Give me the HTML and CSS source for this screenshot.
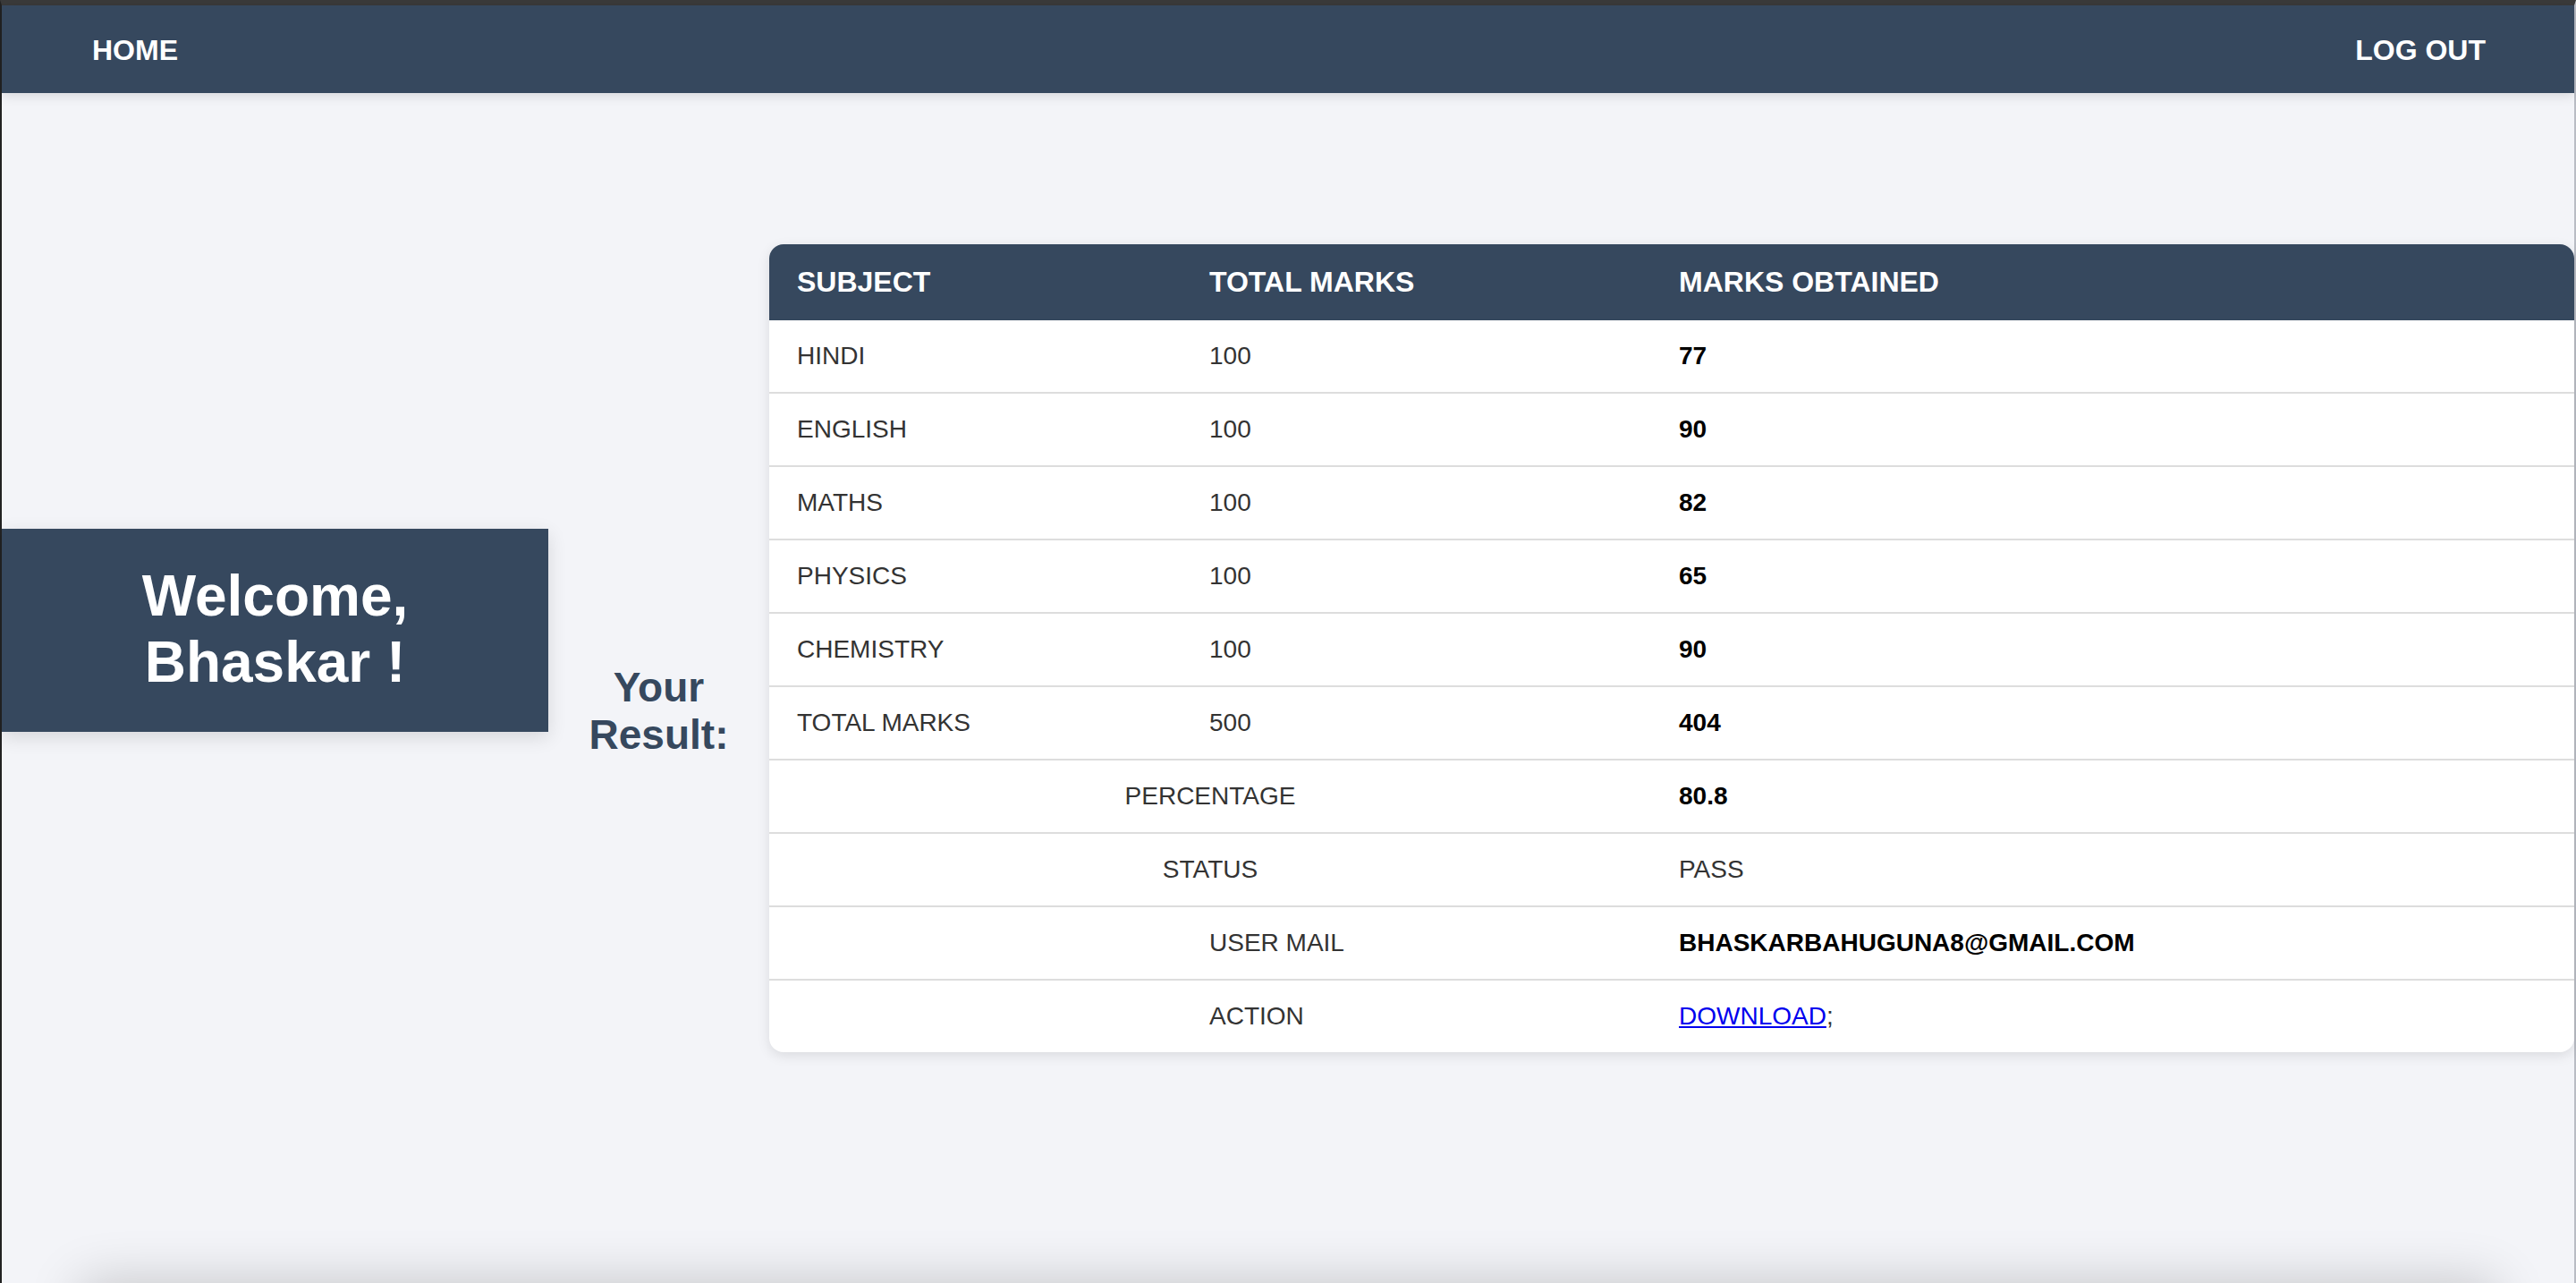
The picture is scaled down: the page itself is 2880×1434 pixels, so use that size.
FILE: index.html
```html
<!DOCTYPE html>
<html lang="en">
<head>
<meta charset="utf-8">
<title>Result</title>
<link rel="stylesheet" href="styles.css">
</head>
<body>
<div class="frame">
  <nav class="nav">
    <a class="nav-link" href="#">HOME</a>
    <a class="nav-link" href="#">LOG OUT</a>
  </nav>
  <main class="main">
    <div class="welcome">
      <h1 class="welcome-text">Welcome,<br>Bhaskar !</h1>
    </div>
    <h2 class="your-result">Your<br>Result:</h2>
    <div class="card">
      <table class="result">
        <colgroup>
          <col class="c1">
          <col class="c2">
          <col class="c3">
        </colgroup>
        <thead>
          <tr><th>SUBJECT</th><th>TOTAL MARKS</th><th>MARKS OBTAINED</th></tr>
        </thead>
        <tbody>
          <tr><td>HINDI</td><td>100</td><td class="strong">77</td></tr>
          <tr><td>ENGLISH</td><td>100</td><td class="strong">90</td></tr>
          <tr><td>MATHS</td><td>100</td><td class="strong">82</td></tr>
          <tr><td>PHYSICS</td><td>100</td><td class="strong">65</td></tr>
          <tr><td>CHEMISTRY</td><td>100</td><td class="strong">90</td></tr>
          <tr><td>TOTAL MARKS</td><td>500</td><td class="strong">404</td></tr>
          <tr><td colspan="2" class="center">PERCENTAGE</td><td class="strong">80.8</td></tr>
          <tr><td colspan="2" class="center">STATUS</td><td>PASS</td></tr>
          <tr><td></td><td>USER MAIL</td><td class="strong">BHASKARBAHUGUNA8@GMAIL.COM</td></tr>
          <tr><td></td><td>ACTION</td><td><a class="dl" href="#">DOWNLOAD</a>;</td></tr>
        </tbody>
      </table>
    </div>
  </main>
</div>
<footer class="footer"></footer>
</body>
</html>
```

FILE: styles.css
```css
* { box-sizing: border-box; }

html, body {
  margin: 0;
  padding: 0;
  overflow: hidden;
}

body {
  background: #f3f4f8;
  font-family: "Liberation Sans", Arial, Helvetica, sans-serif;
  color: #333;
}

.frame {
  height: 100vh;
  display: flex;
  flex-direction: column;
  border-top: 6px solid #3a3a3a;
  border-left: 2px solid #222;
  border-right: 2px solid #b9bcc4;
}

.nav {
  flex-shrink: 0;
  height: 98px;
  background: #36485e;
  display: flex;
  justify-content: space-between;
  align-items: center;
  padding: 3px 99px 0 101px;
  box-shadow: 0 3px 12px rgba(0, 0, 0, 0.12);
  position: relative;
  z-index: 2;
}

.nav-link {
  color: #fff;
  text-decoration: none;
  font-weight: bold;
  font-size: 32px;
  line-height: 37px;
}

.main {
  flex: 1;
  display: flex;
  align-items: flex-start;
  padding-top: 169px;
}

.welcome {
  flex-shrink: 0;
  width: 611px;
  height: 227px;
  margin-top: 318px;
  padding: 38px 0 41px;
  background: #36485e;
  box-shadow: 0 6px 20px rgba(0, 0, 0, 0.12);
}

.welcome-text {
  margin: 0;
  color: #fff;
  font-size: 64px;
  line-height: 74px;
  font-weight: bold;
  text-align: center;
}

.your-result {
  flex-shrink: 0;
  width: 247px;
  margin: 469px 0 0;
  color: #36485e;
  font-size: 46px;
  line-height: 53px;
  font-weight: bold;
  text-align: center;
}

.card {
  flex-shrink: 0;
  width: 2018px;
  background: #fff;
  border-radius: 16px;
  overflow: hidden;
  box-shadow: 0 4px 14px rgba(0, 0, 0, 0.1);
}

.result {
  width: 100%;
  table-layout: fixed;
  border-collapse: separate;
  border-spacing: 0;
}

.c1 { width: 461px; }
.c2 { width: 525px; }

.result th {
  background: #36485e;
  color: #fff;
  font-size: 32px;
  line-height: 36px;
  font-weight: bold;
  text-align: left;
  padding: 24px 31px 25px;
}

.result td {
  font-size: 28px;
  line-height: 36px;
  color: #333;
  padding: 22px 31px;
  border-bottom: 2px solid #dddddd;
  text-align: left;
  white-space: nowrap;
}

.result tbody tr:last-child td {
  border-bottom: none;
}

.result td.center {
  text-align: center;
}

.result td.strong {
  font-weight: bold;
  color: #000;
}

.dl {
  color: #0000ee;
  text-decoration: underline;
}

.footer {
  height: 120px;
  margin: 0 90px;
  background: #f3f4f8;
  box-shadow: 0 0 60px rgba(0, 0, 0, 0.2);
}
```
